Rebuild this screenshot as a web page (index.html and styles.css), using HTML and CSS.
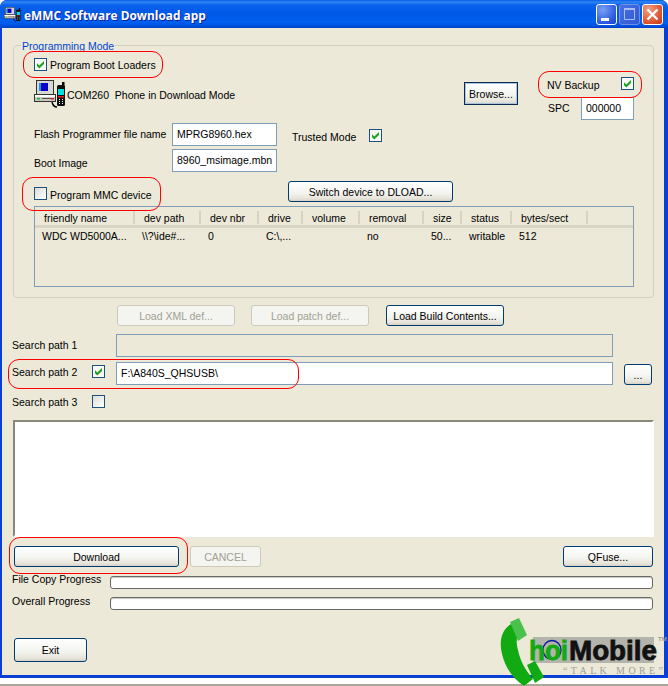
FILE: index.html
```html
<!DOCTYPE html>
<html lang="en">
<head>
<meta charset="utf-8">
<title>eMMC Software Download app</title>
<link rel="stylesheet" href="styles.css">
</head>
<body>
<svg class="defs" width="0" height="0" aria-hidden="true">
  <symbol id="phonepc" viewBox="0 0 32 28">
    <path d="M18 22c1 4 3 5 5 5" fill="none" stroke="#000" stroke-width="1.4"/>
    <rect x="2.5" y="0.5" width="17" height="14" fill="#d8d8d0" stroke="#333"/>
    <rect x="5" y="3" width="9" height="8" fill="#0000c8"/>
    <rect x="5" y="3" width="2" height="8" fill="#2090f0"/>
    <rect x="0.5" y="14.5" width="21" height="7" fill="#c8c8c0" stroke="#333"/>
    <rect x="1" y="15" width="20" height="2" fill="#fff"/>
    <rect x="3" y="18" width="3" height="1.5" fill="#10c030"/>
    <rect x="8" y="18" width="10" height="1" fill="#555"/>
    <rect x="17" y="18" width="3" height="1.5" fill="#e02020"/>
    <rect x="28" y="2" width="2.5" height="4" fill="#000"/>
    <rect x="23" y="5" width="8" height="21" rx="1.5" fill="#101010"/>
    <rect x="24" y="9" width="6" height="6" fill="#00e0e0"/>
    <rect x="24" y="16" width="6" height="1.5" fill="#e02020"/>
    <path d="M25 19h1v1h-1zM28 19h1v1h-1zM25 21h1v1h-1zM28 21h1v1h-1zM25 23h1v1h-1zM28 23h1v1h-1z" fill="#fff"/>
  </symbol>
  <symbol id="tick" viewBox="0 0 11 11">
    <path d="M2 4.300l2.300 2.300L9 1.900v3L4.300 9.600 2 7.300z" fill="#21a121"/>
  </symbol>
</svg>

<div class="window">
  <header class="titlebar">
    <svg class="title-icon"><use href="#phonepc"/></svg>
    <span class="title-text">eMMC Software Download app</span>
    <div class="title-buttons">
      <div class="tb tb-min"><svg viewBox="0 0 19 19"><rect x="4" y="13" width="8" height="3" fill="#fff"/></svg></div>
      <div class="tb tb-max"><svg viewBox="0 0 19 19"><path d="M4.500 3.500h10v11h-10z" fill="none" stroke="#a8bdf0"/><rect x="4" y="3" width="11" height="2" fill="#a8bdf0"/></svg></div>
      <div class="tb tb-close"><svg viewBox="0 0 19 19"><path d="M4.500 4.500l10 10M14.500 4.500l-10 10" stroke="#fff" stroke-width="2.400"/></svg></div>
    </div>
  </header>

  <main class="client">
    <section class="group">
      <div class="legend">Programming Mode</div>

      <div class="row-boot">
        <span class="check on"><svg><use href="#tick"/></svg></span>
        <span class="lbl">Program Boot Loaders</span>
      </div>

      <div class="row-port">
        <svg class="port-icon"><use href="#phonepc"/></svg>
        <span class="port-text">COM260&nbsp; Phone in Download Mode</span>
        <button class="btn btn-browse">Browse...</button>
        <div class="nv-col">
          <div class="nv-line">
            <span class="nv-label">NV Backup</span>
            <span class="check on"><svg><use href="#tick"/></svg></span>
          </div>
          <div class="spc-line">
            <span class="spc-label">SPC</span>
            <div class="input input-spc">000000</div>
          </div>
        </div>
      </div>

      <div class="row-files">
        <div class="file-labels">
          <span class="file-label">Flash Programmer file name</span>
          <span class="file-label file-label2">Boot Image</span>
        </div>
        <div class="file-inputs">
          <div class="input input-file">MPRG8960.hex</div>
          <div class="input input-file">8960_msimage.mbn</div>
        </div>
        <div class="trusted">
          <span class="trusted-label">Trusted Mode</span>
          <span class="check on"><svg><use href="#tick"/></svg></span>
        </div>
      </div>

      <div class="row-mmc">
        <div class="mmc-left">
          <span class="check"></span>
          <span class="lbl">Program MMC device</span>
        </div>
        <button class="btn btn-switch">Switch device to DLOAD...</button>
      </div>

      <div class="list">
        <div class="list-head">
          <span class="hc c1">friendly name</span>
          <span class="hc c2">dev path</span>
          <span class="hc c3">dev nbr</span>
          <span class="hc c4">drive</span>
          <span class="hc c5">volume</span>
          <span class="hc c6">removal</span>
          <span class="hc c7">size</span>
          <span class="hc c8">status</span>
          <span class="hc c9">bytes/sect</span>
        </div>
        <div class="list-row">
          <span class="rc c1">WDC WD5000A...</span>
          <span class="rc c2">\\?\ide#...</span>
          <span class="rc c3">0</span>
          <span class="rc c4">C:\,...</span>
          <span class="rc c5"></span>
          <span class="rc c6">no</span>
          <span class="rc c7">50...</span>
          <span class="rc c8">writable</span>
          <span class="rc c9">512</span>
        </div>
      </div>
    </section>

    <div class="row-load">
      <button class="btn btn-load" disabled>Load XML def...</button>
      <button class="btn btn-load" disabled>Load patch def...</button>
      <button class="btn btn-load btn-build">Load Build Contents...</button>
    </div>

    <div class="row-path row-path1">
      <span class="path-label">Search path 1</span>
      <span class="path-spacer"></span>
      <div class="input input-path input-off"></div>
    </div>
    <div class="row-path row-path2">
      <span class="path-label">Search path 2</span>
      <span class="check on"><svg><use href="#tick"/></svg></span>
      <div class="input input-path">F:\A840S_QHSUSB\</div>
      <button class="btn btn-dots">...</button>
    </div>
    <div class="row-path row-path3">
      <span class="path-label">Search path 3</span>
      <span class="check"></span>
    </div>

    <div class="log"></div>

    <div class="row-actions">
      <button class="btn btn-download">Download</button>
      <button class="btn btn-cancel" disabled>CANCEL</button>
      <button class="btn btn-qfuse">QFuse...</button>
    </div>

    <div class="row-progress row-progress1">
      <span class="progress-label">File Copy Progress</span>
      <div class="bar"></div>
    </div>
    <div class="row-progress row-progress2">
      <span class="progress-label progress-label2">Overall Progress</span>
      <div class="bar"></div>
    </div>

    <button class="btn btn-exit">Exit</button>
  </main>
</div>
<div class="below"></div>

<div class="oval oval-boot"></div>
<div class="oval oval-nv"></div>
<div class="oval oval-mmc"></div>
<div class="oval oval-path"></div>
<div class="oval oval-download"></div>

<svg class="logo" viewBox="498 615 170 71">
  <rect x="533" y="637" width="121" height="26" fill="#b4b4ac"/>
  <path d="M511 624C501 630 499 642 502 654C505 667 513 679 524 686L533 679C525 670 520 660 518 650C516 642 516 636 520 633Z" fill="#12aa12"/>
  <path d="M510 622L519 618L527 635L518 641Z" fill="#4cc04c"/>
  <path d="M527 665L535 661L544 677L535 683Z" fill="#12aa12"/>
  <ellipse cx="552" cy="650" rx="9" ry="9.500" fill="none" stroke="#0a1a9a" stroke-width="1.300"/>
  <text class="logo-hoi" x="529" y="660" textLength="39" lengthAdjust="spacingAndGlyphs">hoi</text>
  <text class="logo-mobile" x="569" y="660" textLength="88" lengthAdjust="spacingAndGlyphs">Mobile</text>
  <text class="logo-talk" x="563" y="674" textLength="101" lengthAdjust="spacing">“TALK MORE”</text>
  <text class="logo-tm" x="658" y="641">TM</text>
</svg>
</body>
</html>
```
FILE: styles.css
```css
* { box-sizing: border-box; }
html, body { margin: 0; padding: 0; background: #fff; overflow: hidden; }
body { position: relative; width: 668px; height: 686px; font: 10.500px/14px "Liberation Sans", "DejaVu Sans", sans-serif; color: #000; }
.defs { display: block; height: 0; }

.window { width: 668px; height: 678px; background: #0a3fd6; border-radius: 7px 7px 0 0; overflow: hidden; display: flex; flex-direction: column; }
.below { height: 8px; border-bottom: 2px solid #aca899; background: #fff; }

.titlebar { height: 28px; flex: none; display: flex; align-items: center; padding: 0 5px 0 4px;
  background: linear-gradient(#0a5ae6 0, #2f86f5 2px, #0a62ee 5px, #0058e6 14px, #0060f0 22px, #0050dc 26px, #0040c8 28px); }
.title-icon { width: 17px; height: 15px; flex: none; }
.title-text { margin: 2px 0 0 3px; font: bold 11.900px/16px "Open Sans", "DejaVu Sans", sans-serif; color: #fff; text-shadow: 1px 1px 0 #0f1f9a; }
.title-buttons { margin-left: auto; display: flex; gap: 2px; }
.tb { width: 21px; height: 21px; border: 1px solid #fff; border-radius: 3px; overflow: hidden; }
.tb svg { display: block; width: 19px; height: 19px; }
.tb-min { background: radial-gradient(circle at 30% 25%, #7aa0f5, #2a58e0 70%, #1c40c8); }
.tb-max { background: linear-gradient(135deg, #4a70e0, #2e58d8); border-color: #6f90e8; }
.tb-close { background: radial-gradient(circle at 30% 25%, #f0a080, #dc5430 65%, #c03818); }

.client { height: 647px; flex: none; margin: 0 4px 3px 2px; background: #ece9d8; padding-top: 17px; }

.group { margin-left: 11px; width: 641px; height: 253px; border: 1px solid #d0d0bf; border-radius: 4px; padding-left: 20px; }
.legend { width: fit-content; margin: -7px 0 0 -13px; padding: 0 1px; height: 14px; background: #ece9d8; color: #0046d5; }

.check { width: 13px; height: 13px; flex: none; border: 1px solid #1c5180; background: linear-gradient(135deg, #dcdcd7, #fff); display: block; }
.check.on { background: #f8f8f4; }
.check svg { display: block; width: 11px; height: 11px; }

.lbl { margin: 2px 0 0 3px; }
.row-boot { margin-top: 4px; height: 14px; display: flex; align-items: center; }

.row-port { margin-top: 6px; height: 44px; display: flex; align-items: flex-start; }
.port-icon { width: 32px; height: 28px; flex: none; margin-top: 3px; }
.port-text { margin: 11px 0 0 1px; width: 397px; flex: none; }
.btn { font: inherit; color: #000; padding: 0; border: 1px solid #003c74; border-radius: 3px;
  background: linear-gradient(#fff, #f3f3ee 60%, #e6e3d8 88%, #d6d0c5); display: block; text-align: center; }
.btn:disabled { color: #a1a192; border-color: #cdcabb; background: #f4f4f0; }
.btn-browse { width: 54px; height: 23px; margin-top: 5px; border-color: #0a2a4e; border-radius: 0; box-shadow: inset 0 0 0 1px #a8c4e0; }
.nv-col { margin-left: 29px; width: 87px; }
.nv-line { display: flex; height: 13px; align-items: center; justify-content: space-between; }
.nv-label { margin-top: 2px; }
.spc-line { display: flex; margin-top: 7px; }
.spc-label { width: 33px; margin: 4px 0 0 1px; }
.input { border: 1px solid #7f9db9; background: #fff; padding-left: 4px; line-height: 21px; white-space: nowrap; overflow: hidden; }
.input-spc { width: 53px; height: 23px; line-height: 20px; }

.row-files { margin-top: 2px; height: 49px; display: flex; }
.file-labels { width: 138px; flex: none; padding-top: 4px; }
.file-label { display: block; white-space: nowrap; }
.file-label2 { margin-top: 15px; }
.file-inputs { width: 105px; flex: none; display: flex; flex-direction: column; gap: 3px; }
.input-file { height: 23px; }
.trusted { margin: 6px 0 0 15px; width: 90px; height: 13px; display: flex; align-items: center; justify-content: space-between; }
.trusted-label { white-space: nowrap; margin-top: 2px; }

.row-mmc { margin-top: 9px; height: 21px; display: flex; }
.mmc-left { width: 254px; flex: none; display: flex; align-items: center; margin-top: 6px; height: 13px; }
.btn-switch { width: 165px; height: 21px; }

.list { margin-top: 4px; width: 600px; height: 81px; border: 1px solid #7f9db9; }
.list-head { height: 21px; display: flex; border-bottom: 3px solid #d8d5c5; }
.list-row { height: 16px; display: flex; }
.hc, .rc { display: block; flex: none; white-space: nowrap; }
.hc { padding: 4px 0 0 9px; background: linear-gradient(#d6d3c3, #d6d3c3) right 4px / 2px 13px no-repeat; }
.rc { padding: 1px 0 0 7px; }
.c1 { width: 100px; }
.c2 { width: 66px; }
.c3 { width: 58px; }
.c4 { width: 44px; }
.c5 { width: 57px; }
.c6 { width: 64px; }
.c7 { width: 38px; }
.c8 { width: 50px; }
.c9 { width: 76px; }

.row-load { margin: 7px 0 0 115px; display: flex; gap: 16px; }
.btn-load { width: 118px; height: 21px; }
.btn-build { margin-left: 1px; }

.row-path { margin-left: 10px; display: flex; align-items: flex-start; }
.row-path1 { margin-top: 8px; }
.row-path2 { margin-top: 5px; }
.row-path3 { margin-top: 10px; height: 13px; }
.path-label { width: 80px; flex: none; }
.path-spacer { width: 13px; flex: none; }
.row-path1 .path-label { margin-top: 4px; }
.row-path2 .path-label { margin-top: 3px; }
.row-path2 .check { margin-top: 3px; }
.input-path { width: 497px; height: 23px; margin-left: 11px; }
.input-off { background: transparent; }
.btn-dots { width: 28px; height: 21px; margin: 2px 0 0 11px; }

.log { margin: 12px 0 0 11px; width: 641px; height: 117px; background: #fff; border: 2px solid; border-color: #8a8878 #fff #fff #8a8878; }

.row-actions { margin: 9px 0 0 12px; display: flex; }
.btn-download { width: 165px; height: 21px; }
.btn-cancel { width: 71px; height: 21px; margin-left: 11px; }
.btn-qfuse { width: 90px; height: 21px; margin-left: 302px; }

.row-progress { margin-left: 10px; display: flex; }
.row-progress1 { margin-top: 9px; }
.row-progress2 { margin-top: 8px; }
.progress-label { width: 98px; flex: none; margin-top: -4px; white-space: nowrap; }
.progress-label2 { margin-top: -3px; }
.bar { width: 543px; height: 13px; background: #fff; border: 1px solid #686868; border-radius: 3px; box-shadow: inset 0 1px 1px #c8c8c0; }

.btn-exit { margin: 28px 0 0 12px; width: 73px; height: 24px; }

.oval { position: absolute; border: 1px solid #f00; border-radius: 11px; }
.oval-boot { left: 23px; top: 51px; width: 140px; height: 27px; }
.oval-nv { left: 538px; top: 71px; width: 104px; height: 27px; }
.oval-mmc { left: 22px; top: 177px; width: 139px; height: 34px; }
.oval-path { left: 8px; top: 359px; width: 291px; height: 30px; }
.oval-download { left: 9px; top: 537px; width: 179px; height: 37px; }

.logo { position: absolute; left: 498px; top: 615px; width: 170px; height: 71px; }
.logo-hoi { font: bold 27px "Liberation Sans", sans-serif; fill: #12aa12; stroke: #12aa12; stroke-width: 0.8px; }
.logo-mobile { font: bold 27px "Liberation Sans", sans-serif; fill: #111; stroke: #111; stroke-width: 0.8px; }
.logo-talk { font: 10px "Liberation Serif", serif; fill: #a0a098; letter-spacing: 1px; }
.logo-tm { font: bold 6px "Liberation Sans", sans-serif; fill: #999; }
```
